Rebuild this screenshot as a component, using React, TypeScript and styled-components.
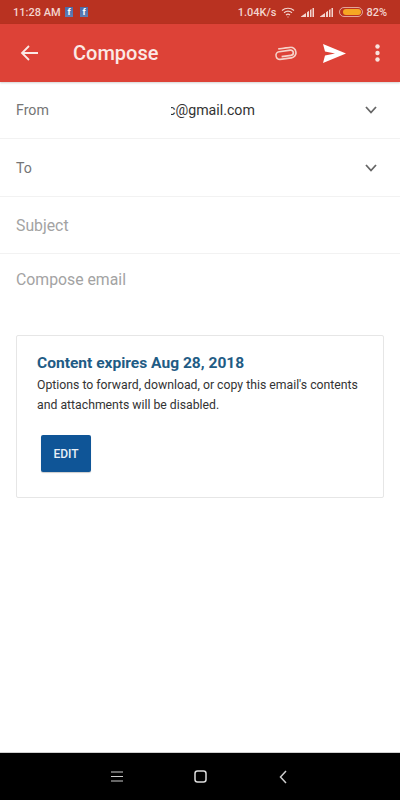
import styled, { createGlobalStyle } from 'styled-components'

const GlobalStyle = createGlobalStyle`
  html, body {
    margin: 0;
    padding: 0;
    background: #fff;
  }
  * {
    box-sizing: border-box;
  }
`

const Screen = styled.div`
  width: 400px;
  height: 800px;
  display: flex;
  flex-direction: column;
  font-family: Roboto, "Liberation Sans", sans-serif;
  background: #fff;
  overflow: hidden;
`

const StatusBar = styled.div`
  height: 24px;
  flex: none;
  display: flex;
  align-items: center;
  padding: 0 13px;
  background: #b93221;
  color: #f3d5cf;
  font-size: 11px;
  font-weight: 500;
`

const StatusTime = styled.span`
  width: 52px;
`

const FbBadge = styled.span`
  width: 8px;
  height: 10px;
  margin-right: 7px;
  display: flex;
  justify-content: center;
  background: linear-gradient(#4a6aa8, #5f7fb5);
  color: #fff;
  font-size: 9px;
  line-height: 11px;
  font-weight: 700;
`

const StatusRight = styled.div`
  margin-left: auto;
  display: flex;
  align-items: center;
`

const SpeedText = styled.span`
  margin-right: 5px;
`

const SignalSlot = styled.span`
  display: flex;
  margin-left: 6px;
`

const Battery = styled.span`
  width: 24px;
  height: 10px;
  margin: 0 3px 0 6px;
  padding: 1px;
  border: 1px solid rgba(243, 213, 207, 0.7);
  border-radius: 5px;
  display: flex;
`

const BatteryFill = styled.span`
  flex: 1;
  margin-left: 2px;
  background: #f6a623;
  border-radius: 3px;
`

const Toolbar = styled.div`
  height: 58px;
  flex: none;
  display: flex;
  align-items: center;
  background: #dd4237;
  color: #fff;
  box-shadow: 0 1px 2px rgba(0, 0, 0, 0.18);
`

const BackButton = styled.div`
  width: 73px;
  padding-left: 20px;
  display: flex;
`

const Title = styled.div`
  flex: 1;
  font-size: 20px;
  font-weight: 500;
  color: #fbe9e5;
`

const Actions = styled.div`
  display: flex;
  align-items: center;
  gap: 29px;
  padding-right: 20px;
`

const ClipIcon = styled.svg`
  margin-right: -3px;
  transform: rotate(-8deg);
`

const Row = styled.div<{ $height: number }>`
  height: ${p => p.$height}px;
  flex: none;
  display: flex;
  align-items: center;
  padding: 0 23px 0 16px;
  border-bottom: 1px solid #f2f2f2;
`

const FieldLabel = styled.span`
  width: 152px;
  font-size: 14.2px;
  color: #757575;
`

const FromValue = styled.span`
  position: relative;
  white-space: nowrap;
  font-size: 14.2px;
  color: #333;

  &::before {
    content: '';
    position: absolute;
    left: 0;
    top: 0;
    bottom: 0;
    width: 3px;
    background: #fff;
  }
`

const Placeholder = styled.span`
  font-size: 15.8px;
  color: #a3a3a3;
`

const BodyRow = styled.div`
  padding: 16px 16px 0;
  height: 81px;
  flex: none;
`

const Notice = styled.div`
  margin: 0 16px;
  height: 163px;
  flex: none;
  padding: 16px 20px;
  border: 1px solid #e6e6e6;
  border-radius: 2px;
`

const NoticeTitle = styled.div`
  font-size: 15.55px;
  line-height: 23px;
  font-weight: 700;
  color: #1f5c85;
`

const NoticeText = styled.div`
  font-size: 12.25px;
  line-height: 20px;
  color: #333;
`

const EditButton = styled.div`
  width: 50px;
  height: 37px;
  margin: 20px 0 0 4px;
  display: flex;
  align-items: center;
  justify-content: center;
  background: #0f5597;
  border-radius: 2px;
  color: #e9f0f7;
  font-size: 12px;
  font-weight: 500;
  box-shadow: 0 1px 1px rgba(0, 0, 0, 0.2);
`

const Spacer = styled.div`
  flex: 1;
`

const NavBar = styled.div`
  height: 48px;
  flex: none;
  display: grid;
  grid-template-columns: repeat(3, 83px);
  justify-content: center;
  align-items: center;
  justify-items: center;
  background: #000;
  border-top: 1px solid #d0d0d0;
`

const Chevron = () => (
  <svg width="12" height="8" viewBox="0 0 12 8" fill="none" stroke="#666" strokeWidth="1.800">
    <path d="M1 1l5 5.500L11 1" />
  </svg>
)

const Signal = () => (
  <svg width="13" height="10" viewBox="0 0 13 10" fill="#f3d5cf">
    <path d="M0 9.500L5 6v4H0zM6 5.200l2-1.400V10H6zM9 3l1.500-1V10H9zM11.500 1H13v9h-1.500z" />
  </svg>
)

const App = () => (
  <>
    <GlobalStyle />
    <Screen>
      <StatusBar>
        <StatusTime>11:28 AM</StatusTime>
        <FbBadge>f</FbBadge>
        <FbBadge>f</FbBadge>
        <StatusRight>
          <SpeedText>1.04K/s</SpeedText>
          <svg width="14" height="11" viewBox="0 0 14 11" fill="none" stroke="#f3d5cf" strokeWidth="1.200">
            <path d="M1 3.500c3.500-3 8.500-3 12 0M3 5.800c2.500-2 5.500-2 8 0M5 8c1.300-1 2.700-1 4 0" />
            <path d="M6.500 10h1" />
          </svg>
          <SignalSlot>
            <Signal />
          </SignalSlot>
          <SignalSlot>
            <Signal />
          </SignalSlot>
          <Battery>
            <BatteryFill />
          </Battery>
          <span>82%</span>
        </StatusRight>
      </StatusBar>
      <Toolbar>
        <BackButton>
          <svg width="18" height="16" viewBox="0 0 18 16" fill="none" stroke="#fbe9e5" strokeWidth="1.800">
            <path d="M18 8H2M9 1L2 8l7 7" />
          </svg>
        </BackButton>
        <Title>Compose</Title>
        <Actions>
          <ClipIcon width="22" height="13" viewBox="2.500 0.500 19.500 11.500" fill="none" stroke="#f6d2c9" strokeWidth="1.500">
            <path d="M8 8.500h8.500a2.300 2.300 0 0 0 0-4.600H6.500a3.300 3.300 0 0 0 0 6.800h10a4.700 4.700 0 0 0 0-9.400H6" />
          </ClipIcon>
          <svg width="23" height="19" viewBox="0 0 23 19" fill="#fff">
            <path d="M0 0l23 9.500L0 19l2-7.500 10-2-10-2z" />
          </svg>
          <svg width="5" height="18" viewBox="0 0 5 18" fill="#f8e3de">
            <circle cx="2.500" cy="2.500" r="2.200" />
            <circle cx="2.500" cy="9" r="2.200" />
            <circle cx="2.500" cy="15.500" r="2.200" />
          </svg>
        </Actions>
      </Toolbar>
      <Row $height={57}>
        <FieldLabel>From</FieldLabel>
        <FromValue>c@gmail.com</FromValue>
        <Spacer />
        <Chevron />
      </Row>
      <Row $height={58}>
        <FieldLabel>To</FieldLabel>
        <Spacer />
        <Chevron />
      </Row>
      <Row $height={57}>
        <Placeholder>Subject</Placeholder>
      </Row>
      <BodyRow>
        <Placeholder>Compose email</Placeholder>
      </BodyRow>
      <Notice>
        <NoticeTitle>Content expires Aug 28, 2018</NoticeTitle>
        <NoticeText>
          Options to forward, download, or copy this email's contents
          <br />
          and attachments will be disabled.
        </NoticeText>
        <EditButton>EDIT</EditButton>
      </Notice>
      <Spacer />
      <NavBar>
        <svg width="12" height="11" viewBox="0 0 12 11" stroke="#ccc" strokeWidth="1.200">
          <path d="M0 1h12M0 5.500h12M0 10h12" />
        </svg>
        <svg width="13" height="13" viewBox="0 0 13 13" fill="none" stroke="#ddd" strokeWidth="1.500">
          <rect x="1" y="1" width="11" height="11" rx="2.500" />
        </svg>
        <svg width="8" height="14" viewBox="0 0 8 14" fill="none" stroke="#ccc" strokeWidth="1.500">
          <path d="M7 1L1.500 7 7 13" />
        </svg>
      </NavBar>
    </Screen>
  </>
)

export default App
